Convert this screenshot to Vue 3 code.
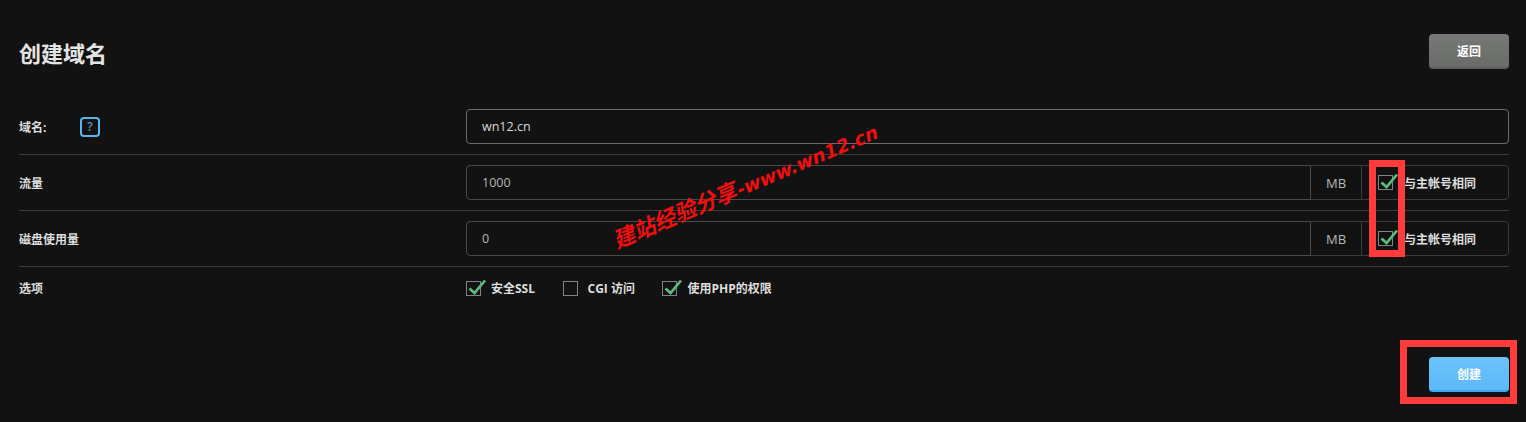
<script setup>
const quotaRows = [
  { label: '流量', value: '1000' },
  { label: '磁盘使用量', value: '0' },
]
const options = [
  { label: '安全SSL', checked: true },
  { label: 'CGI 访问', checked: false },
  { label: '使用PHP的权限', checked: true },
]
</script>

<template>
  <main class="page">
    <header class="head">
      <h1 class="title">创建域名</h1>
      <button class="btn btn-gray" type="button">返回</button>
    </header>

    <section class="form">
      <div class="row">
        <div class="label">
          <span class="label-text">域名:</span>
          <span class="help">?</span>
        </div>
        <div class="field"><span class="input solo light">wn12.cn</span></div>
      </div>

      <div v-for="r in quotaRows" :key="r.label" class="row">
        <div class="label"><span class="label-text">{{ r.label }}</span></div>
        <div class="field group">
          <span class="input grow">{{ r.value }}</span>
          <span class="unit">MB</span>
          <label class="same">
            <span class="box">
              <svg class="tick" viewBox="0 0 20 18" width="20" height="18"><path d="M2.5 10.5 L7.5 15 L18 2.5" /></svg>
            </span>
            <span class="same-text">与主帐号相同</span>
          </label>
        </div>
      </div>

      <div class="row last">
        <div class="label"><span class="label-text">选项</span></div>
        <div class="options">
          <label v-for="o in options" :key="o.label" class="opt">
            <span class="box">
              <svg v-if="o.checked" class="tick" viewBox="0 0 20 18" width="20" height="18"><path d="M2.5 10.5 L7.5 15 L18 2.5" /></svg>
            </span>
            <span class="opt-text">{{ o.label }}</span>
          </label>
        </div>
      </div>
    </section>

    <footer class="foot">
      <button class="btn btn-blue" type="button">创建</button>
    </footer>

    <div class="mark mark-a"></div>
    <div class="mark mark-b"></div>
    <div class="stamp">建站经验分享<span class="stamp-latin">-www.wn12.cn</span></div>
  </main>
</template>

<style>
html, body { margin: 0; background: #121212; }
</style>

<style scoped>
.page {
  position: relative;
  height: 422px;
  box-sizing: border-box;
  padding: 34px 17px 0 19px;
  background: #121212;
  color: #dcdcdc;
  font-family: "Open Sans", "Noto Sans CJK SC", sans-serif;
  overflow: hidden;
}
.head {
  display: flex;
  justify-content: space-between;
  align-items: center;
  height: 35px;
  margin-bottom: 30px;
}
.title {
  margin: 0;
  font-size: 22px;
  font-weight: 700;
  color: #e4e4e4;
}
.btn {
  width: 80px;
  height: 35px;
  border: 0;
  border-radius: 4px;
  font: 700 12px "Open Sans", "Noto Sans CJK SC", sans-serif;
  color: #fff;
  padding: 0;
}
.btn-gray {
  background: linear-gradient(#777977, #696b69);
  border-bottom: 2px solid #5c5e5c;
}
.btn-blue {
  background: linear-gradient(#6cc3fb, #5db9f7);
  border-bottom: 2px solid #40aaf0;
}
.row {
  display: grid;
  grid-template-columns: 447px 1fr;
  align-items: center;
  height: 56px;
  box-sizing: border-box;
  border-bottom: 1px solid #3c3c3c;
}
.row.last { border-bottom: 0; height: 42px; }
.label {
  display: flex;
  align-items: center;
  font-size: 12px;
  font-weight: 700;
  color: #dedede;
}
.label-text { width: 61px; }
.help {
  width: 16px;
  height: 16px;
  border: 2px solid #5ab4ee;
  border-radius: 4px;
  display: flex;
  align-items: center;
  justify-content: center;
  font-size: 12px;
  font-weight: 600;
  color: #4a93c4;
}
.field { display: flex; height: 35px; }
.input {
  box-sizing: border-box;
  display: flex;
  align-items: center;
  padding: 0 15px;
  font-size: 12.5px;
  color: #b4b4b4;
  border: 1px solid #4a4a4a;
}
.solo {
  flex: 1;
  border-radius: 4px;
  border-color: #6b6b6b;
}
.light { color: #d8d8d8; }
.grow { flex: 1; border-radius: 4px 0 0 4px; }
.unit {
  box-sizing: border-box;
  width: 50px;
  display: flex;
  align-items: center;
  justify-content: center;
  font-size: 13px;
  color: #b8b8b8;
  border-top: 1px solid #3c3c3c;
  border-bottom: 1px solid #3c3c3c;
}
.same {
  box-sizing: border-box;
  width: 148px;
  display: flex;
  align-items: center;
  padding-left: 16px;
  border: 1px solid #3c3c3c;
  border-radius: 0 4px 4px 0;
}
.same-text {
  margin-left: 11px;
  font-size: 12px;
  font-weight: 700;
  color: #dedede;
}
.box {
  position: relative;
  flex: none;
  box-sizing: border-box;
  width: 15px;
  height: 15px;
  border: 1px solid #7f8389;
}
.tick {
  position: absolute;
  left: 0;
  top: -4px;
  fill: none;
  stroke: #5dbb7d;
  stroke-width: 2.7;
}
.options { display: flex; align-items: center; }
.opt { display: flex; align-items: center; margin-right: 27.5px; }
.opt-text {
  margin-left: 10px;
  font-size: 12px;
  font-weight: 700;
  color: #dedede;
}
.foot {
  display: flex;
  justify-content: flex-end;
  margin-top: 48px;
}
.mark {
  position: absolute;
  box-sizing: border-box;
  border: 7px solid #ff3b3b;
}
.mark-a { left: 1369px; top: 160px; width: 36px; height: 97px; }
.mark-b { left: 1400px; top: 340px; width: 117px; height: 64px; }
.stamp {
  position: absolute;
  left: 746px;
  top: 183px;
  transform: translate(-50%, -50%) rotate(-23deg) skewX(-14deg);
  white-space: nowrap;
  color: #f00f0f;
  font-size: 22px;
  font-weight: 700;
}
.stamp-latin {
  font-family: "DejaVu Sans", sans-serif;
  font-size: 18.5px;
}
</style>
